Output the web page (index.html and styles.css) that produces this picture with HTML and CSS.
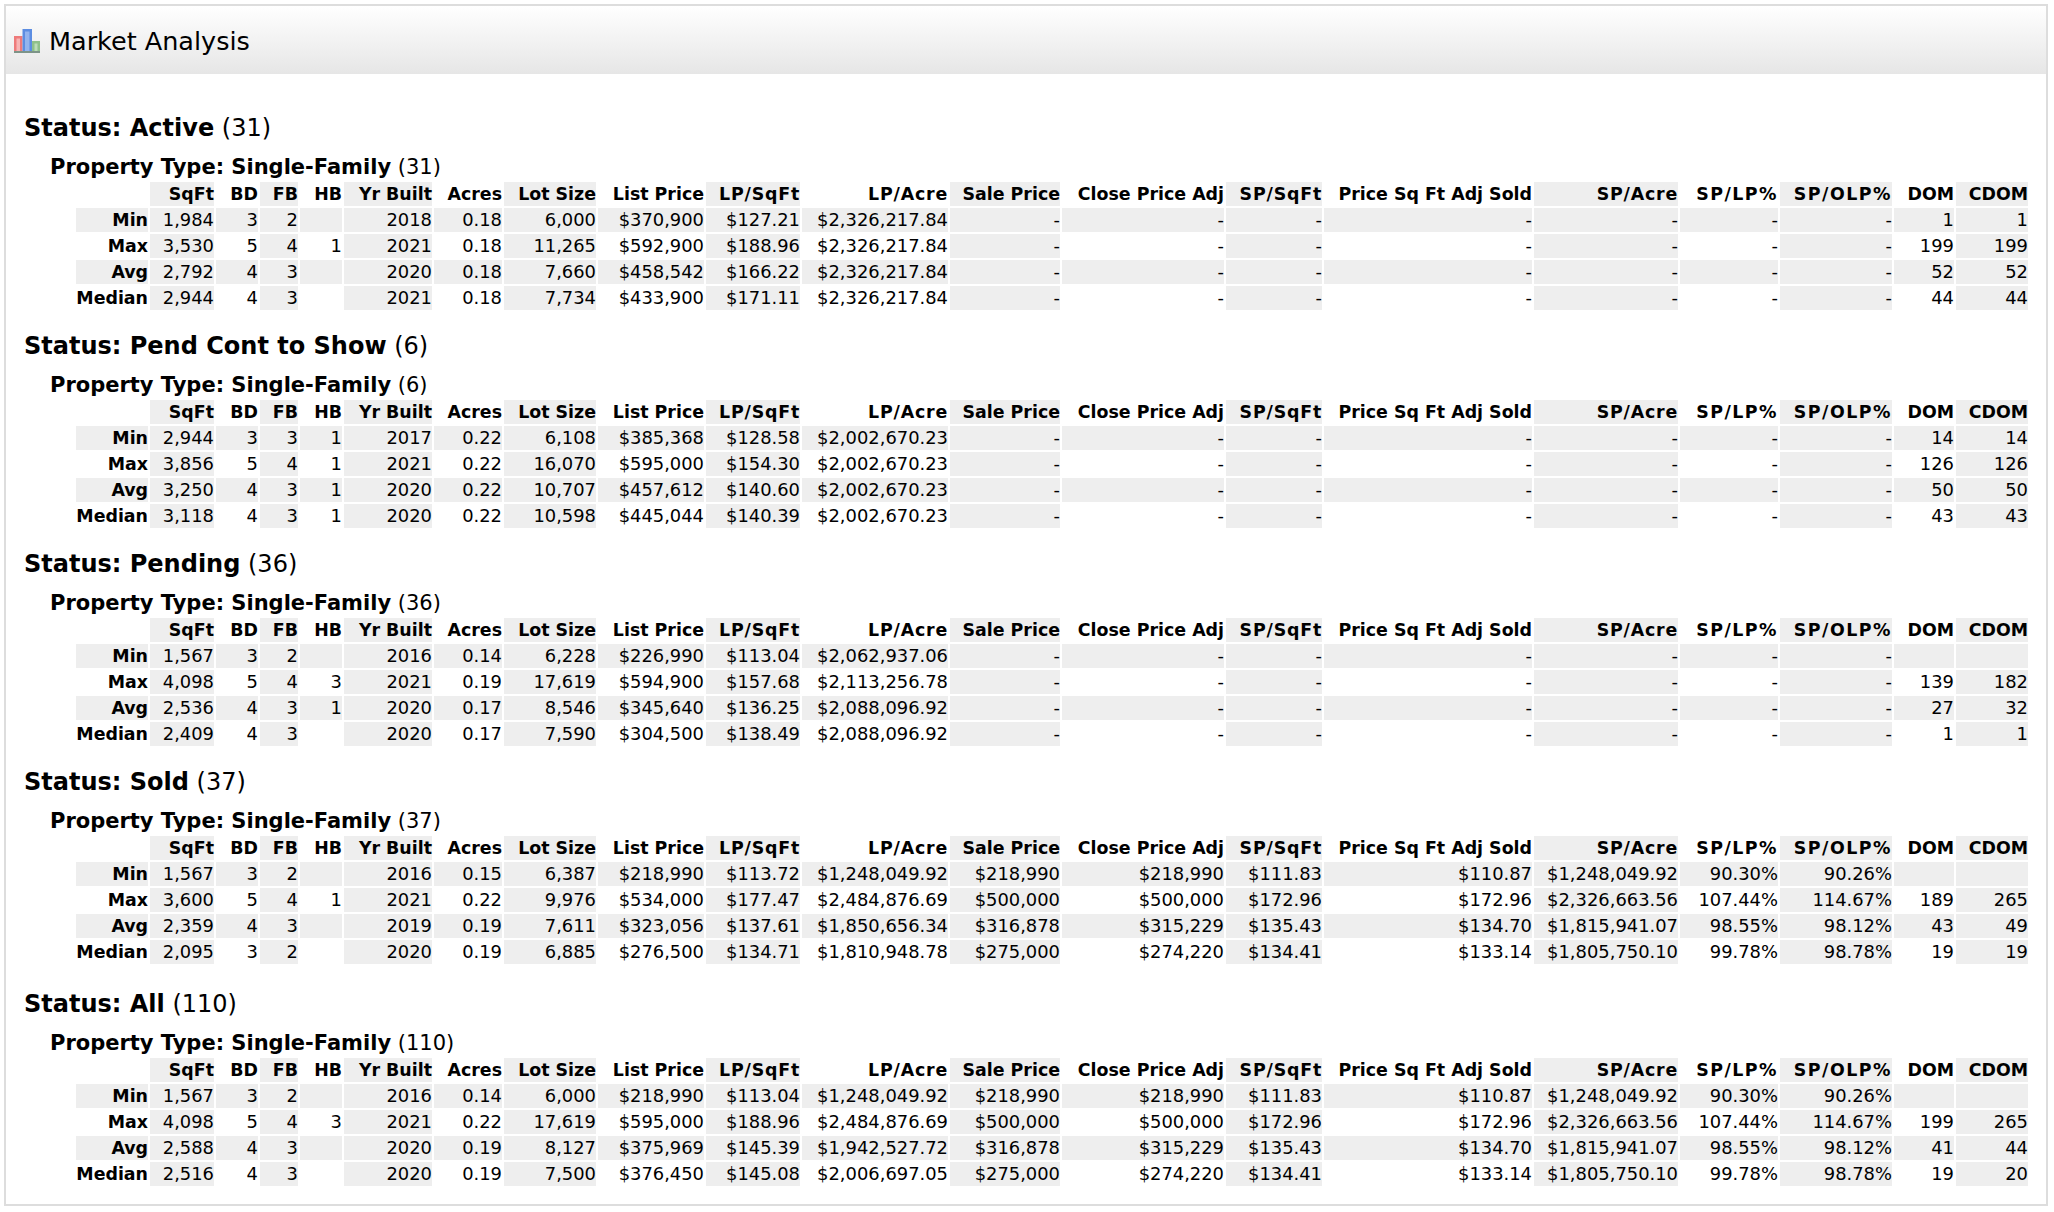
FILE: index.html
```html
<!DOCTYPE html>
<html lang="en">
<head>
  <meta charset="UTF-8">
  <title>Market Analysis</title>
  <link rel="stylesheet" href="styles.css">
</head>
<body>
  <div class="panel">
    <div class="panel-header">
      <svg class="chart-icon" width="26" height="24" viewBox="0 0 26 24">
        <rect x="0" y="7" width="8.5" height="15" fill="#ee7a7a"/>
        <rect x="2.5" y="9.5" width="3.5" height="12.5" fill="#f7b4b4"/>
        <rect x="8.5" y="0" width="9.5" height="22" fill="#5c8de2"/>
        <rect x="11" y="2.5" width="4.5" height="19.5" fill="#93b4ee"/>
        <rect x="18" y="12" width="8" height="10" fill="#8fc08a"/>
        <rect x="20.5" y="14.5" width="3" height="7.5" fill="#bcdcb8"/>
        <rect x="0" y="22" width="26" height="2" fill="#7d9488"/>
      </svg>
      <span class="panel-title">Market Analysis</span>
    </div>
    <div class="panel-body">

      <h2 class="status"><b>Status: Active</b> (31)</h2>
      <h3 class="prop-type"><b>Property Type: Single-Family</b> (31)</h3>
      <table class="stats">
        <colgroup>
          <col class="c-label"><col class="c-sqft"><col class="c-bd"><col class="c-fb"><col class="c-hb"><col class="c-yr"><col class="c-acres"><col class="c-lot"><col class="c-list"><col class="c-lpsf"><col class="c-lpac"><col class="c-sale"><col class="c-close"><col class="c-spsf"><col class="c-adj"><col class="c-spac"><col class="c-splp"><col class="c-spolp"><col class="c-dom"><col class="c-cdom">
        </colgroup>
        <tr><th></th><th>SqFt</th><th>BD</th><th>FB</th><th>HB</th><th>Yr Built</th><th>Acres</th><th>Lot Size</th><th>List Price</th><th class="slash">LP/SqFt</th><th class="slash">LP/Acre</th><th>Sale Price</th><th>Close Price Adj</th><th class="slash">SP/SqFt</th><th>Price Sq Ft Adj Sold</th><th class="slash">SP/Acre</th><th class="pct">SP/LP%</th><th class="pct">SP/OLP%</th><th>DOM</th><th>CDOM</th></tr>
        <tr class="shade"><th>Min</th><td>1,984</td><td>3</td><td>2</td><td></td><td>2018</td><td>0.18</td><td>6,000</td><td>$370,900</td><td>$127.21</td><td>$2,326,217.84</td><td>-</td><td>-</td><td>-</td><td>-</td><td>-</td><td>-</td><td>-</td><td>1</td><td>1</td></tr>
        <tr><th>Max</th><td>3,530</td><td>5</td><td>4</td><td>1</td><td>2021</td><td>0.18</td><td>11,265</td><td>$592,900</td><td>$188.96</td><td>$2,326,217.84</td><td>-</td><td>-</td><td>-</td><td>-</td><td>-</td><td>-</td><td>-</td><td>199</td><td>199</td></tr>
        <tr class="shade"><th>Avg</th><td>2,792</td><td>4</td><td>3</td><td></td><td>2020</td><td>0.18</td><td>7,660</td><td>$458,542</td><td>$166.22</td><td>$2,326,217.84</td><td>-</td><td>-</td><td>-</td><td>-</td><td>-</td><td>-</td><td>-</td><td>52</td><td>52</td></tr>
        <tr><th>Median</th><td>2,944</td><td>4</td><td>3</td><td></td><td>2021</td><td>0.18</td><td>7,734</td><td>$433,900</td><td>$171.11</td><td>$2,326,217.84</td><td>-</td><td>-</td><td>-</td><td>-</td><td>-</td><td>-</td><td>-</td><td>44</td><td>44</td></tr>
      </table>

      <h2 class="status"><b>Status: Pend Cont to Show</b> (6)</h2>
      <h3 class="prop-type"><b>Property Type: Single-Family</b> (6)</h3>
      <table class="stats">
        <colgroup>
          <col class="c-label"><col class="c-sqft"><col class="c-bd"><col class="c-fb"><col class="c-hb"><col class="c-yr"><col class="c-acres"><col class="c-lot"><col class="c-list"><col class="c-lpsf"><col class="c-lpac"><col class="c-sale"><col class="c-close"><col class="c-spsf"><col class="c-adj"><col class="c-spac"><col class="c-splp"><col class="c-spolp"><col class="c-dom"><col class="c-cdom">
        </colgroup>
        <tr><th></th><th>SqFt</th><th>BD</th><th>FB</th><th>HB</th><th>Yr Built</th><th>Acres</th><th>Lot Size</th><th>List Price</th><th class="slash">LP/SqFt</th><th class="slash">LP/Acre</th><th>Sale Price</th><th>Close Price Adj</th><th class="slash">SP/SqFt</th><th>Price Sq Ft Adj Sold</th><th class="slash">SP/Acre</th><th class="pct">SP/LP%</th><th class="pct">SP/OLP%</th><th>DOM</th><th>CDOM</th></tr>
        <tr class="shade"><th>Min</th><td>2,944</td><td>3</td><td>3</td><td>1</td><td>2017</td><td>0.22</td><td>6,108</td><td>$385,368</td><td>$128.58</td><td>$2,002,670.23</td><td>-</td><td>-</td><td>-</td><td>-</td><td>-</td><td>-</td><td>-</td><td>14</td><td>14</td></tr>
        <tr><th>Max</th><td>3,856</td><td>5</td><td>4</td><td>1</td><td>2021</td><td>0.22</td><td>16,070</td><td>$595,000</td><td>$154.30</td><td>$2,002,670.23</td><td>-</td><td>-</td><td>-</td><td>-</td><td>-</td><td>-</td><td>-</td><td>126</td><td>126</td></tr>
        <tr class="shade"><th>Avg</th><td>3,250</td><td>4</td><td>3</td><td>1</td><td>2020</td><td>0.22</td><td>10,707</td><td>$457,612</td><td>$140.60</td><td>$2,002,670.23</td><td>-</td><td>-</td><td>-</td><td>-</td><td>-</td><td>-</td><td>-</td><td>50</td><td>50</td></tr>
        <tr><th>Median</th><td>3,118</td><td>4</td><td>3</td><td>1</td><td>2020</td><td>0.22</td><td>10,598</td><td>$445,044</td><td>$140.39</td><td>$2,002,670.23</td><td>-</td><td>-</td><td>-</td><td>-</td><td>-</td><td>-</td><td>-</td><td>43</td><td>43</td></tr>
      </table>

      <h2 class="status"><b>Status: Pending</b> (36)</h2>
      <h3 class="prop-type"><b>Property Type: Single-Family</b> (36)</h3>
      <table class="stats">
        <colgroup>
          <col class="c-label"><col class="c-sqft"><col class="c-bd"><col class="c-fb"><col class="c-hb"><col class="c-yr"><col class="c-acres"><col class="c-lot"><col class="c-list"><col class="c-lpsf"><col class="c-lpac"><col class="c-sale"><col class="c-close"><col class="c-spsf"><col class="c-adj"><col class="c-spac"><col class="c-splp"><col class="c-spolp"><col class="c-dom"><col class="c-cdom">
        </colgroup>
        <tr><th></th><th>SqFt</th><th>BD</th><th>FB</th><th>HB</th><th>Yr Built</th><th>Acres</th><th>Lot Size</th><th>List Price</th><th class="slash">LP/SqFt</th><th class="slash">LP/Acre</th><th>Sale Price</th><th>Close Price Adj</th><th class="slash">SP/SqFt</th><th>Price Sq Ft Adj Sold</th><th class="slash">SP/Acre</th><th class="pct">SP/LP%</th><th class="pct">SP/OLP%</th><th>DOM</th><th>CDOM</th></tr>
        <tr class="shade"><th>Min</th><td>1,567</td><td>3</td><td>2</td><td></td><td>2016</td><td>0.14</td><td>6,228</td><td>$226,990</td><td>$113.04</td><td>$2,062,937.06</td><td>-</td><td>-</td><td>-</td><td>-</td><td>-</td><td>-</td><td>-</td><td></td><td></td></tr>
        <tr><th>Max</th><td>4,098</td><td>5</td><td>4</td><td>3</td><td>2021</td><td>0.19</td><td>17,619</td><td>$594,900</td><td>$157.68</td><td>$2,113,256.78</td><td>-</td><td>-</td><td>-</td><td>-</td><td>-</td><td>-</td><td>-</td><td>139</td><td>182</td></tr>
        <tr class="shade"><th>Avg</th><td>2,536</td><td>4</td><td>3</td><td>1</td><td>2020</td><td>0.17</td><td>8,546</td><td>$345,640</td><td>$136.25</td><td>$2,088,096.92</td><td>-</td><td>-</td><td>-</td><td>-</td><td>-</td><td>-</td><td>-</td><td>27</td><td>32</td></tr>
        <tr><th>Median</th><td>2,409</td><td>4</td><td>3</td><td></td><td>2020</td><td>0.17</td><td>7,590</td><td>$304,500</td><td>$138.49</td><td>$2,088,096.92</td><td>-</td><td>-</td><td>-</td><td>-</td><td>-</td><td>-</td><td>-</td><td>1</td><td>1</td></tr>
      </table>

      <h2 class="status"><b>Status: Sold</b> (37)</h2>
      <h3 class="prop-type"><b>Property Type: Single-Family</b> (37)</h3>
      <table class="stats">
        <colgroup>
          <col class="c-label"><col class="c-sqft"><col class="c-bd"><col class="c-fb"><col class="c-hb"><col class="c-yr"><col class="c-acres"><col class="c-lot"><col class="c-list"><col class="c-lpsf"><col class="c-lpac"><col class="c-sale"><col class="c-close"><col class="c-spsf"><col class="c-adj"><col class="c-spac"><col class="c-splp"><col class="c-spolp"><col class="c-dom"><col class="c-cdom">
        </colgroup>
        <tr><th></th><th>SqFt</th><th>BD</th><th>FB</th><th>HB</th><th>Yr Built</th><th>Acres</th><th>Lot Size</th><th>List Price</th><th class="slash">LP/SqFt</th><th class="slash">LP/Acre</th><th>Sale Price</th><th>Close Price Adj</th><th class="slash">SP/SqFt</th><th>Price Sq Ft Adj Sold</th><th class="slash">SP/Acre</th><th class="pct">SP/LP%</th><th class="pct">SP/OLP%</th><th>DOM</th><th>CDOM</th></tr>
        <tr class="shade"><th>Min</th><td>1,567</td><td>3</td><td>2</td><td></td><td>2016</td><td>0.15</td><td>6,387</td><td>$218,990</td><td>$113.72</td><td>$1,248,049.92</td><td>$218,990</td><td>$218,990</td><td>$111.83</td><td>$110.87</td><td>$1,248,049.92</td><td>90.30%</td><td>90.26%</td><td></td><td></td></tr>
        <tr><th>Max</th><td>3,600</td><td>5</td><td>4</td><td>1</td><td>2021</td><td>0.22</td><td>9,976</td><td>$534,000</td><td>$177.47</td><td>$2,484,876.69</td><td>$500,000</td><td>$500,000</td><td>$172.96</td><td>$172.96</td><td>$2,326,663.56</td><td>107.44%</td><td>114.67%</td><td>189</td><td>265</td></tr>
        <tr class="shade"><th>Avg</th><td>2,359</td><td>4</td><td>3</td><td></td><td>2019</td><td>0.19</td><td>7,611</td><td>$323,056</td><td>$137.61</td><td>$1,850,656.34</td><td>$316,878</td><td>$315,229</td><td>$135.43</td><td>$134.70</td><td>$1,815,941.07</td><td>98.55%</td><td>98.12%</td><td>43</td><td>49</td></tr>
        <tr><th>Median</th><td>2,095</td><td>3</td><td>2</td><td></td><td>2020</td><td>0.19</td><td>6,885</td><td>$276,500</td><td>$134.71</td><td>$1,810,948.78</td><td>$275,000</td><td>$274,220</td><td>$134.41</td><td>$133.14</td><td>$1,805,750.10</td><td>99.78%</td><td>98.78%</td><td>19</td><td>19</td></tr>
      </table>

      <h2 class="status status-all"><b>Status: All</b> (110)</h2>
      <h3 class="prop-type"><b>Property Type: Single-Family</b> (110)</h3>
      <table class="stats">
        <colgroup>
          <col class="c-label"><col class="c-sqft"><col class="c-bd"><col class="c-fb"><col class="c-hb"><col class="c-yr"><col class="c-acres"><col class="c-lot"><col class="c-list"><col class="c-lpsf"><col class="c-lpac"><col class="c-sale"><col class="c-close"><col class="c-spsf"><col class="c-adj"><col class="c-spac"><col class="c-splp"><col class="c-spolp"><col class="c-dom"><col class="c-cdom">
        </colgroup>
        <tr><th></th><th>SqFt</th><th>BD</th><th>FB</th><th>HB</th><th>Yr Built</th><th>Acres</th><th>Lot Size</th><th>List Price</th><th class="slash">LP/SqFt</th><th class="slash">LP/Acre</th><th>Sale Price</th><th>Close Price Adj</th><th class="slash">SP/SqFt</th><th>Price Sq Ft Adj Sold</th><th class="slash">SP/Acre</th><th class="pct">SP/LP%</th><th class="pct">SP/OLP%</th><th>DOM</th><th>CDOM</th></tr>
        <tr class="shade"><th>Min</th><td>1,567</td><td>3</td><td>2</td><td></td><td>2016</td><td>0.14</td><td>6,000</td><td>$218,990</td><td>$113.04</td><td>$1,248,049.92</td><td>$218,990</td><td>$218,990</td><td>$111.83</td><td>$110.87</td><td>$1,248,049.92</td><td>90.30%</td><td>90.26%</td><td></td><td></td></tr>
        <tr><th>Max</th><td>4,098</td><td>5</td><td>4</td><td>3</td><td>2021</td><td>0.22</td><td>17,619</td><td>$595,000</td><td>$188.96</td><td>$2,484,876.69</td><td>$500,000</td><td>$500,000</td><td>$172.96</td><td>$172.96</td><td>$2,326,663.56</td><td>107.44%</td><td>114.67%</td><td>199</td><td>265</td></tr>
        <tr class="shade"><th>Avg</th><td>2,588</td><td>4</td><td>3</td><td></td><td>2020</td><td>0.19</td><td>8,127</td><td>$375,969</td><td>$145.39</td><td>$1,942,527.72</td><td>$316,878</td><td>$315,229</td><td>$135.43</td><td>$134.70</td><td>$1,815,941.07</td><td>98.55%</td><td>98.12%</td><td>41</td><td>44</td></tr>
        <tr><th>Median</th><td>2,516</td><td>4</td><td>3</td><td></td><td>2020</td><td>0.19</td><td>7,500</td><td>$376,450</td><td>$145.08</td><td>$2,006,697.05</td><td>$275,000</td><td>$274,220</td><td>$134.41</td><td>$133.14</td><td>$1,805,750.10</td><td>99.78%</td><td>98.78%</td><td>19</td><td>20</td></tr>
      </table>

    </div>
  </div>
</body>
</html>
```

FILE: styles.css
```css
body {
  font-family: "DejaVu Sans", Verdana, sans-serif;
  color: #000;
  background-color: #fff;
  margin: 4px 6px 0 4px;
}

.panel {
  border: 2px solid #ddd;
  height: 1202px;
  box-sizing: border-box;
}

.panel-header {
  display: flex;
  align-items: center;
  gap: 9px;
  height: 68px;
  padding-left: 8px;
  background: linear-gradient(to bottom, #fff, #e6e6e6);
}

.chart-icon {
  flex: none;
  margin-top: 2px;
}

.panel-title {
  font-size: 25.5px;
  padding-top: 2px;
}

.panel-body {
  padding: 20px 0 0 18px;
}

.status {
  font-size: 24px;
  font-weight: normal;
  line-height: 30px;
  margin: 0;
  padding-top: 19px;
}

.status-all {
  padding-top: 23px;
}

.prop-type {
  font-size: 21px;
  font-weight: normal;
  line-height: 24px;
  margin: 0;
  padding: 12px 0 0 26px;
}

.stats {
  table-layout: fixed;
  border-collapse: separate;
  border-spacing: 2px;
  margin-left: 50px;
  margin-top: 1px;
  width: 1954px;
  font-size: 17.9px;
}

.stats th,
.stats td {
  height: 24px;
  padding: 0;
  text-align: right;
  white-space: nowrap;
  line-height: 24px;
}

.stats th {
  font-size: 17.4px;
}

.stats th.slash {
  letter-spacing: 0.8px;
}

.stats th.pct {
  letter-spacing: 1.5px;
}

.stats tr > :nth-child(even),
.stats tr.shade > * {
  background-color: #eee;
}

.c-label { width: 72px; }
.c-sqft { width: 64px; }
.c-bd { width: 42px; }
.c-fb { width: 38px; }
.c-hb { width: 42px; }
.c-yr { width: 88px; }
.c-acres { width: 68px; }
.c-lot { width: 92px; }
.c-list { width: 106px; }
.c-lpsf { width: 94px; }
.c-lpac { width: 146px; }
.c-sale { width: 110px; }
.c-close { width: 162px; }
.c-spsf { width: 96px; }
.c-adj { width: 208px; }
.c-spac { width: 144px; }
.c-splp { width: 98px; }
.c-spolp { width: 112px; }
.c-dom { width: 60px; }
.c-cdom { width: 72px; }
```
